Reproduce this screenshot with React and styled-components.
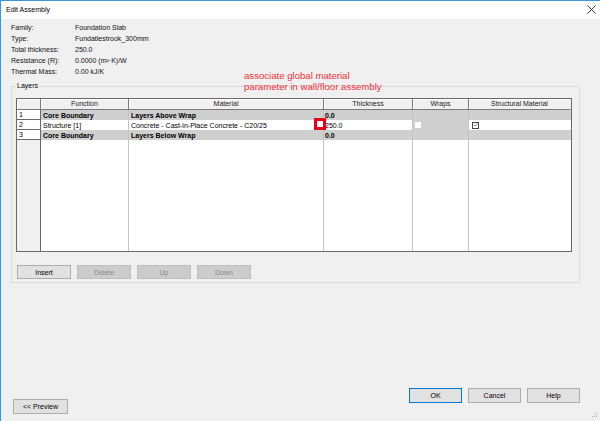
import React from "react";
import styled, { createGlobalStyle, css } from "styled-components";

const GlobalStyle = createGlobalStyle`
  html, body {
    margin: 0;
    padding: 0;
    background: #f0f0f0;
  }
  body {
    font-family: "Liberation Sans", Arial, sans-serif;
    font-size: 7px;
    color: #000;
  }
  * {
    box-sizing: border-box;
  }
`;

const layers = [
  { num: "1", fn: "Core Boundary", material: "Layers Above Wrap", thickness: "0.0", core: true },
  { num: "2", fn: "Structure [1]", material: "Concrete - Cast-in-Place Concrete - C20/25", thickness: "250.0", core: false },
  { num: "3", fn: "Core Boundary", material: "Layers Below Wrap", thickness: "0.0", core: true },
];

const info = [
  ["Family:", "Foundation Slab"],
  ["Type:", "Fundatiestrook_300mm"],
  ["Total thickness:", "250.0"],
  ["Resistance (R):", "0.0000 (m²·K)/W"],
  ["Thermal Mass:", "0.00 kJ/K"],
];

function App() {
  return (
    <>
      <GlobalStyle />
      <Window>
        <TitleBar>
          <span>Edit Assembly</span>
          <svg width="9" height="9" viewBox="0 0 9 9">
            <path d="M0.5 0.5 L8.5 8.5 M8.5 0.5 L0.5 8.5" stroke="#222" strokeWidth="0.9" />
          </svg>
        </TitleBar>

        <Content>
          <InfoGrid>
            {info.map(([label, value]) => (
              <React.Fragment key={label}>
                <span>{label}</span>
                <span>{value}</span>
              </React.Fragment>
            ))}
          </InfoGrid>

          <GroupBox>
            <Legend>Layers</Legend>
            <Table>
              <Row $header>
                <HeadCell />
                <HeadCell>Function</HeadCell>
                <HeadCell>Material</HeadCell>
                <HeadCell>Thickness</HeadCell>
                <HeadCell>Wraps</HeadCell>
                <HeadCell $last>Structural Material</HeadCell>
              </Row>
              {layers.map((l) => (
                <Row key={l.num}>
                  <NumCell>{l.num}</NumCell>
                  <Cell $grey={l.core} $bold={l.core}>{l.fn}</Cell>
                  <Cell $grey={l.core} $bold={l.core}>{l.material}</Cell>
                  <Cell $grey={l.core} $bold={l.core} $tight>{l.thickness}</Cell>
                  <Cell $grey>{!l.core && <WrapBox />}</Cell>
                  <Cell $grey={l.core} $last>
                    {!l.core && (
                      <Check>
                        <svg width="7" height="7" viewBox="0 0 7 7">
                          <path d="M1.2 3.4 L2.8 5 L5.8 1.6" stroke="#222" strokeWidth="0.8" fill="none" />
                        </svg>
                      </Check>
                    )}
                  </Cell>
                </Row>
              ))}
              <FillRow>
                <NumFill />
                <Fill />
                <Fill />
                <Fill />
                <Fill />
                <Fill $last />
              </FillRow>
              <Marker />
            </Table>

            <ButtonRow>
              <Button>Insert</Button>
              <Button disabled>Delete</Button>
              <Button disabled>Up</Button>
              <Button disabled>Down</Button>
            </ButtonRow>
          </GroupBox>
        </Content>

        <Footer>
          <Button $wide>&lt;&lt; Preview</Button>
          <DialogButtons>
            <Button $default>OK</Button>
            <Button>Cancel</Button>
            <Button>Help</Button>
          </DialogButtons>
        </Footer>

        <Annotation>
          associate global material
          <br />
          parameter in wall/floor assembly
        </Annotation>

        <Grip width="6" height="6" viewBox="0 0 6 6">
          <rect x="4" y="0" width="1" height="1" fill="#b8b8b8" />
          <rect x="2" y="2" width="1" height="1" fill="#b8b8b8" />
          <rect x="4" y="2" width="1" height="1" fill="#b8b8b8" />
          <rect x="0" y="4" width="1" height="1" fill="#b8b8b8" />
          <rect x="2" y="4" width="1" height="1" fill="#b8b8b8" />
          <rect x="4" y="4" width="1" height="1" fill="#b8b8b8" />
        </Grip>
      </Window>
    </>
  );
}

const Window = styled.div`
  position: relative;
  width: 600px;
  height: 421px;
  display: flex;
  flex-direction: column;
  background: #f0f0f0;
  border-top: 1px solid #3b97de;
  border-left: 1px solid #3b97de;
  overflow: hidden;
`;

const TitleBar = styled.div`
  height: 18px;
  flex: none;
  display: flex;
  align-items: center;
  justify-content: space-between;
  padding: 0 4px 1px 5px;
  background: #ffffff;
  font-size: 7px;
`;

const Content = styled.div`
  padding: 3px 20px 0 10px;
`;

const InfoGrid = styled.div`
  display: grid;
  grid-template-columns: 64px auto;
  line-height: 11px;
  color: #111;
`;

const GroupBox = styled.div`
  position: relative;
  margin-top: 9px;
  padding: 11px 7px 3px 4px;
  border: 1px solid #dcdcdc;
`;

const Legend = styled.span`
  position: absolute;
  top: -6px;
  left: 4px;
  padding: 0 1px;
  background: #f0f0f0;
  line-height: 10px;
`;

const Table = styled.div`
  position: relative;
  width: 556px;
  height: 154px;
  display: flex;
  flex-direction: column;
  border: 1px solid #6a6a6a;
  background: #ffffff;
`;

const columns = "24px 88px 195px 89px 56px 102px";

const Row = styled.div`
  display: grid;
  grid-template-columns: ${columns};
  height: ${(p) => (p.$header ? "11px" : "10px")};
  flex: none;
`;

const HeadCell = styled.div`
  display: flex;
  align-items: center;
  justify-content: center;
  background: #f0f0f0;
  border-right: 1px solid ${(p) => (p.$last ? "#f0f0f0" : "#7a7a7a")};
  border-bottom: 1px solid #7a7a7a;
  box-shadow: inset 1px 1px 0 #ffffff;
  color: #222;
  line-height: 10px;
`;

const NumCell = styled.div`
  display: flex;
  align-items: center;
  padding-left: 2px;
  background: #ffffff;
  border-right: 1px solid #6a6a6a;
  border-bottom: 1px solid #6a6a6a;
  line-height: 9px;
`;

const Cell = styled.div`
  position: relative;
  display: flex;
  align-items: center;
  padding-left: ${(p) => (p.$tight ? "1px" : "2px")};
  background: ${(p) => (p.$grey ? "#cfcfcf" : "#ffffff")};
  border-right: 1px solid ${(p) => (p.$last ? "transparent" : "#c4c4c4")};
  white-space: nowrap;
  line-height: 9px;
  ${(p) =>
    p.$bold &&
    css`
      font-weight: bold;
    `}
`;

const WrapBox = styled.span`
  display: block;
  width: 6px;
  height: 6px;
  margin-left: 0;
  background: #ffffff;
`;

const Check = styled.span`
  display: flex;
  align-items: center;
  justify-content: center;
  width: 7px;
  height: 7px;
  margin-left: 1px;
  border: 1px solid #444;
  background: #fff;
  svg {
    width: 6px;
    height: 6px;
  }
`;

const FillRow = styled.div`
  flex: 1;
  display: grid;
  grid-template-columns: ${columns};
`;

const NumFill = styled.div`
  background: #f0f0f0;
  border-right: 1px solid #6a6a6a;
`;

const Fill = styled.div`
  border-right: 1px solid ${(p) => (p.$last ? "transparent" : "#c4c4c4")};
`;

const Marker = styled.div`
  position: absolute;
  left: 297px;
  top: 19px;
  width: 12px;
  height: 12px;
  border: 3px solid #e8001a;
  background: #ffffff;
`;

const ButtonRow = styled.div`
  display: flex;
  gap: 6px;
  margin: 13px 0 0 1px;
`;

const Button = styled.button`
  width: ${(p) => (p.$wide ? "55px" : "54px")};
  height: 14px;
  padding: 0;
  font-family: "Liberation Sans", Arial, sans-serif;
  font-size: 7px;
  color: #000;
  background: #e1e1e1;
  border: 1px solid ${(p) => (p.$default ? "#0078d7" : "#adadad")};
  border-radius: 0;

  &:disabled {
    background: #cccccc;
    border-color: #bfbfbf;
    color: #8a8a8a;
  }
`;

const Footer = styled.div`
  margin-top: auto;
  display: flex;
  justify-content: space-between;
  align-items: flex-end;
  padding: 0 20px 7px 12px;

  & > button {
    height: 15px;
  }
`;

const DialogButtons = styled.div`
  display: flex;
  gap: 6px;
  margin-bottom: 11px;

  & > button {
    width: 53px;
    height: 15px;
  }
`;

const Annotation = styled.div`
  position: absolute;
  left: 243px;
  top: 69px;
  color: #f0303a;
  font-family: "Liberation Sans", Arial, sans-serif;
  font-size: 9.6px;
  line-height: 11px;
`;

const Grip = styled.svg`
  position: absolute;
  right: 2px;
  bottom: 3px;
`;

export default App;
